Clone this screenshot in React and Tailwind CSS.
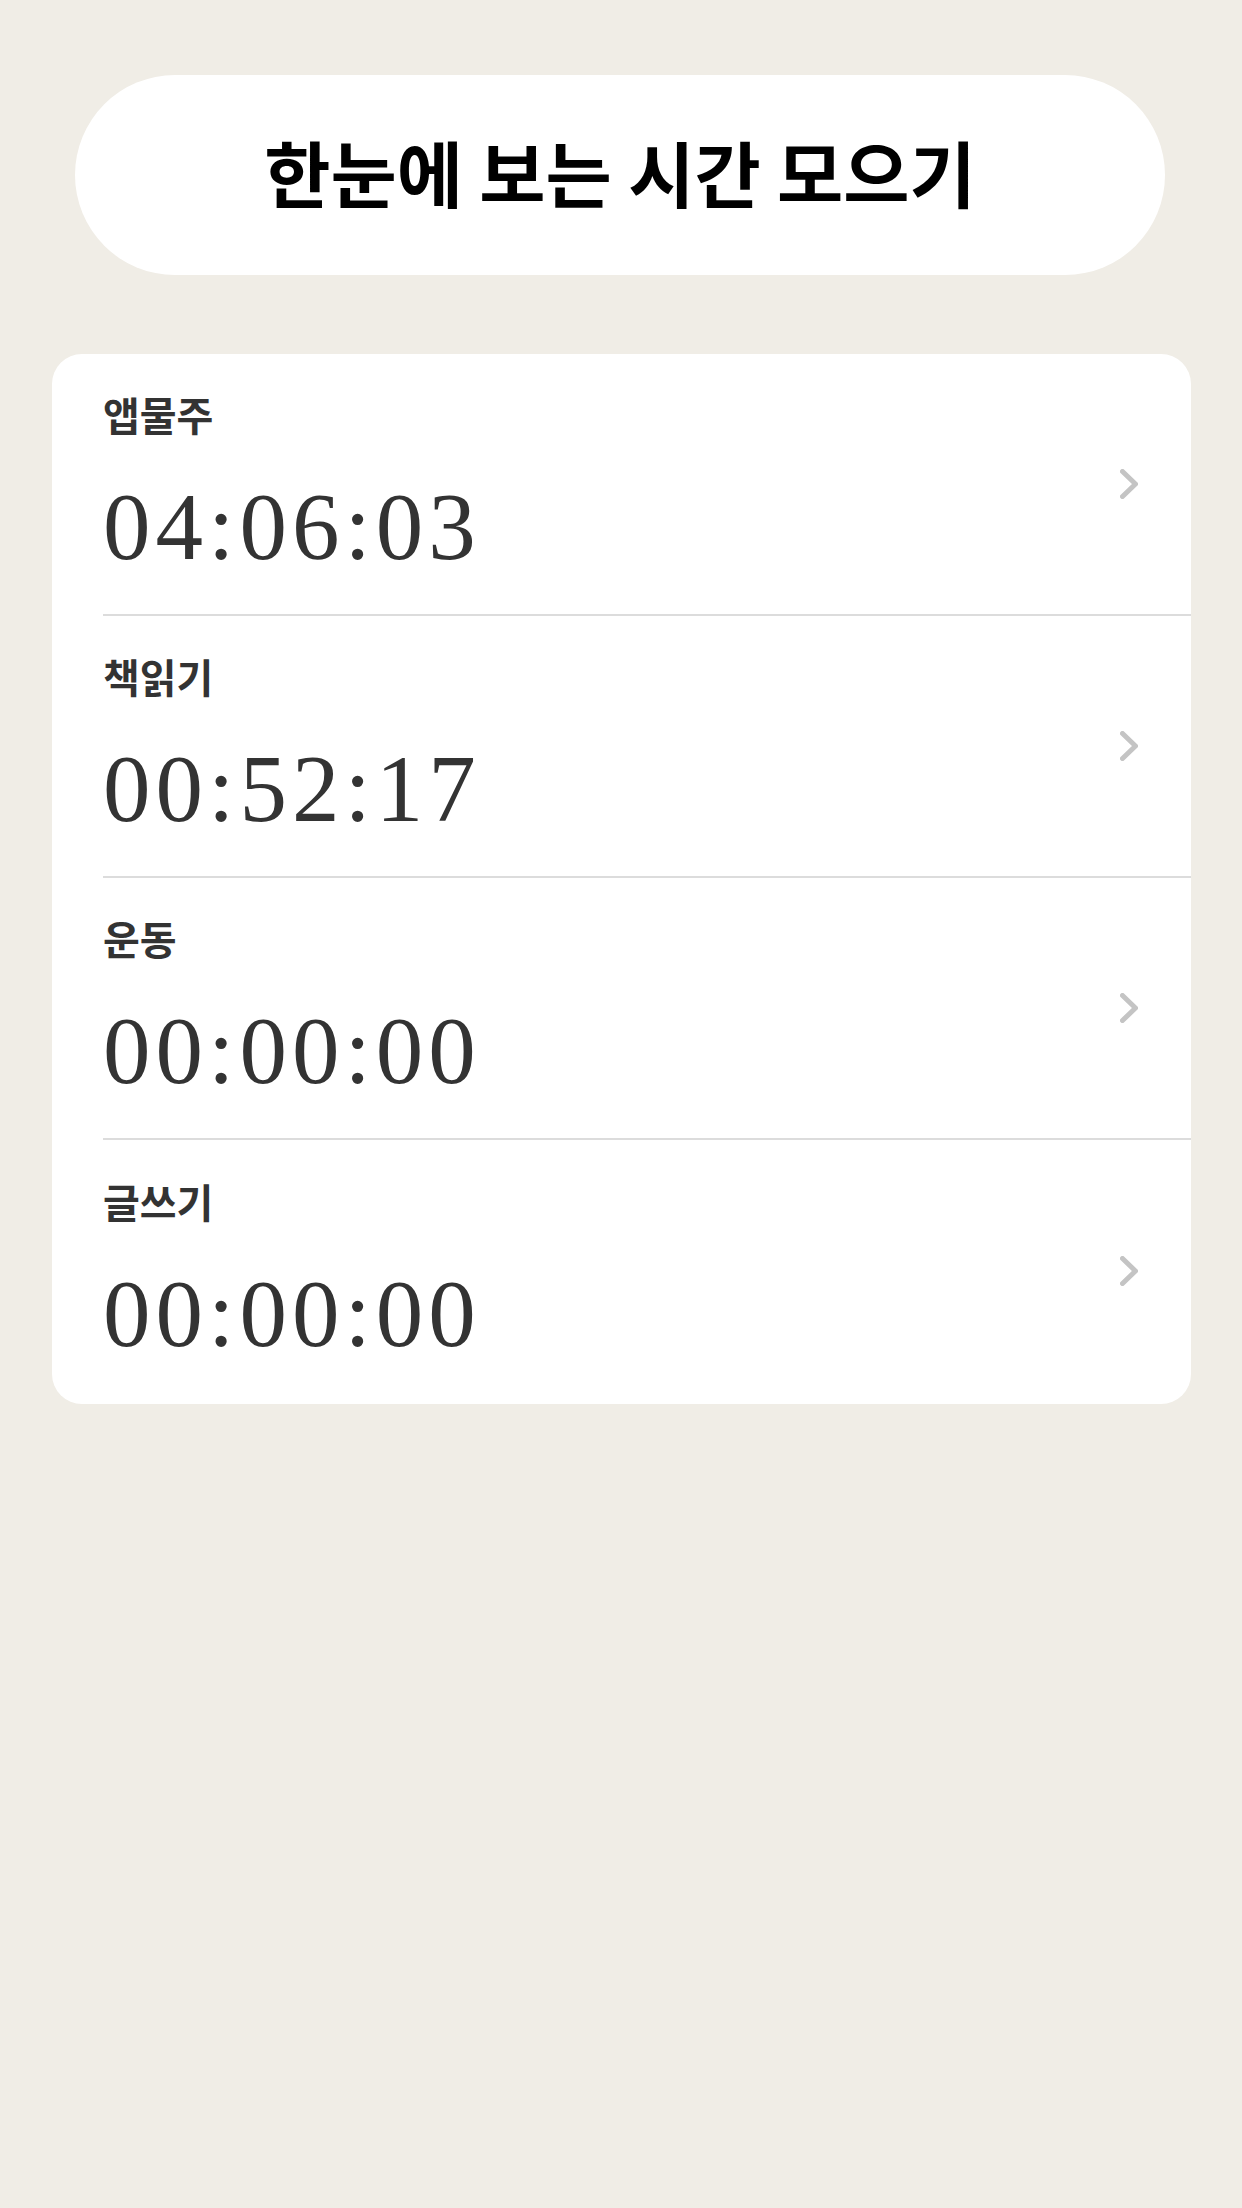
import React from "react";

const rows = [
  { label: "앱물주", time: "04:06:03" },
  { label: "책읽기", time: "00:52:17" },
  { label: "운동", time: "00:00:00" },
  { label: "글쓰기", time: "00:00:00" },
];

function Chevron() {
  return (
    <svg width="18" height="30" viewBox="0 0 18 30" fill="none">
      <polyline
        points="2.5,2.5 15.5,15 2.5,27.5"
        stroke="#c4c4c4"
        strokeWidth="5"
        strokeLinecap="round"
        strokeLinejoin="round"
      />
    </svg>
  );
}

export default function App() {
  return (
    <div className="min-h-[2208px] w-full bg-[#f0ede6] pt-[75px]">
      <div className="mx-[75px] flex h-[200px] w-[1090px] items-center justify-center rounded-full bg-white pb-[8px]">
        <h1
          className="text-[72px] font-bold leading-none text-black"
          style={{ fontFamily: '"Noto Sans CJK KR", "Noto Sans", sans-serif' }}
        >
          한눈에 보는 시간 모으기
        </h1>
      </div>

      <div className="ml-[52px] mt-[79px] w-[1139px] rounded-[30px] bg-white pb-[2px]">
        {rows.map((r, i) => (
          <div
            key={i}
            className={
              "ml-[51px] flex h-[262px] items-center justify-between pr-[53px] " +
              (i < rows.length - 1 ? "border-b-2 border-[#dcdcdc]" : "")
            }
          >
            <div className="flex flex-col">
              <div
                className="text-[40px] font-bold leading-[40px] text-[#333333]"
                style={{ fontFamily: '"Noto Sans CJK KR", "Noto Sans", sans-serif' }}
              >
                {r.label}
              </div>
              <div
                className="mt-[45px] text-[95px] font-normal leading-[96px] tracking-[5px] text-[#333333]"
                style={{ fontFamily: '"Liberation Serif", "DejaVu Serif", serif' }}
              >
                {r.time}
              </div>
            </div>
            <Chevron />
          </div>
        ))}
      </div>
    </div>
  );
}
